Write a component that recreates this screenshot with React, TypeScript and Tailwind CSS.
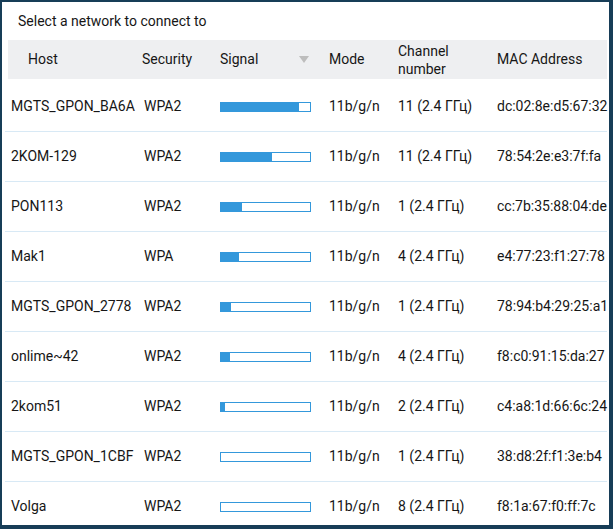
const networks = [
  { host: "MGTS_GPON_BA6A", security: "WPA2", signal: 78, mode: "11b/g/n", channel: "11 (2.4 ГГц)", mac: "dc:02:8e:d5:67:32" },
  { host: "2KOM-129", security: "WPA2", signal: 51, mode: "11b/g/n", channel: "11 (2.4 ГГц)", mac: "78:54:2e:e3:7f:fa" },
  { host: "PON113", security: "WPA2", signal: 21, mode: "11b/g/n", channel: "1 (2.4 ГГц)", mac: "cc:7b:35:88:04:de" },
  { host: "Mak1", security: "WPA", signal: 18, mode: "11b/g/n", channel: "4 (2.4 ГГц)", mac: "e4:77:23:f1:27:78" },
  { host: "MGTS_GPON_2778", security: "WPA2", signal: 10, mode: "11b/g/n", channel: "1 (2.4 ГГц)", mac: "78:94:b4:29:25:a1" },
  { host: "onlime~42", security: "WPA2", signal: 9, mode: "11b/g/n", channel: "4 (2.4 ГГц)", mac: "f8:c0:91:15:da:27" },
  { host: "2kom51", security: "WPA2", signal: 4, mode: "11b/g/n", channel: "2 (2.4 ГГц)", mac: "c4:a8:1d:66:6c:24" },
  { host: "MGTS_GPON_1CBF", security: "WPA2", signal: 0, mode: "11b/g/n", channel: "1 (2.4 ГГц)", mac: "38:d8:2f:f1:3e:b4" },
  { host: "Volga", security: "WPA2", signal: 0, mode: "11b/g/n", channel: "8 (2.4 ГГц)", mac: "f8:1a:67:f0:ff:7c" },
];

function SignalBar({ value }: { value: number }) {
  return (
    <div className="w-[91px] h-[10px] border border-[#3498db] bg-white">
      <div className="h-full bg-[#3498db]" style={{ width: value }} />
    </div>
  );
}

export default function App() {
  return (
    <div
      className="w-[613px] h-[529px] overflow-hidden bg-white border-l-2 border-t-2 border-r-4 border-b-4 border-[#173d57] text-[14px] text-[#161616]"
      style={{ fontFamily: "Roboto, 'Liberation Sans', sans-serif" }}
    >
      {/* Title */}
      <div className="h-[38px] flex items-center pl-4">Select a network to connect to</div>

      <div className="ml-[3px] mr-[2px]">
        {/* Header */}
        <div className="ml-[3px] h-[39px] bg-[#eeeff1] grid grid-cols-[130px_76px_109px_69px_99px_1fr] items-center">
          <div className="pl-[20px]">Host</div>
          <div className="pl-[4px]">Security</div>
          <div className="pl-[6px] pr-[14px] flex items-center justify-between">
            <span>Signal</span>
            <span className="w-0 h-0 border-l-[5.5px] border-r-[5.5px] border-t-[7px] border-l-transparent border-r-transparent border-t-[#bdbdbd]" />
          </div>
          <div className="pl-[6px]">Mode</div>
          <div className="pl-[6px] leading-[18px]">
            Channel
            <br />
            number
          </div>
          <div className="pl-[6px]">MAC Address</div>
        </div>

        <div className="h-[3px]" />

        {/* Rows */}
        {networks.map((n) => (
          <div
            key={n.mac}
            className="h-[50px] border-b border-[#d8e9f5] grid grid-cols-[133px_76px_109px_69px_99px_1fr] items-center whitespace-nowrap"
          >
            <div className="pl-[6px]">{n.host}</div>
            <div className="pl-[6px]">{n.security}</div>
            <div className="pl-[6px]">
              <SignalBar value={n.signal} />
            </div>
            <div className="pl-[6px]">{n.mode}</div>
            <div className="pl-[6px]">{n.channel}</div>
            <div className="pl-[6px]">{n.mac}</div>
          </div>
        ))}
      </div>
    </div>
  );
}
